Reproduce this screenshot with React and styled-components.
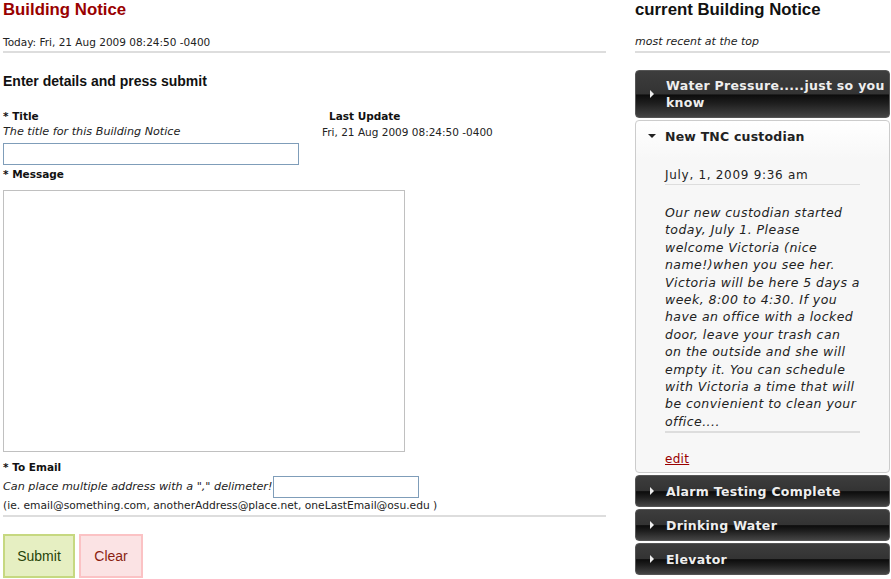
import React from 'react';
import styled, { createGlobalStyle } from 'styled-components';

const Global = createGlobalStyle`
  html, body {
    margin: 0;
    padding: 0;
    background: #fff;
    font-family: 'DejaVu Sans', Verdana, sans-serif;
    color: #222;
  }
`;

const notices = [
  { id: 1, title: 'Water Pressure.....just so you know' },
  {
    id: 2,
    title: 'New TNC custodian',
    open: true,
    date: 'July, 1, 2009 9:36 am',
    body:
      'Our new custodian started today, July 1. Please welcome Victoria (nice name!)when you see her. Victoria will be here 5 days a week, 8:00 to 4:30. If you have an office with a locked door, leave your trash can on the outside and she will empty it. You can schedule with Victoria a time that will be convienient to clean your office....',
  },
  { id: 3, title: 'Alarm Testing Complete' },
  { id: 4, title: 'Drinking Water' },
  { id: 5, title: 'Elevator' },
];

const Page = styled.div`
  display: flex;
  align-items: flex-start;
  padding: 0 1px 0 3px;
  gap: 29px;
`;

const Main = styled.div`
  width: 603px;
`;

const Side = styled.div`
  width: 255px;
`;

const Title = styled.h1`
  margin: 0;
  font-family: 'Liberation Sans', Arial, sans-serif;
  font-size: 16.8px;
  line-height: 20px;
  font-weight: bold;
  color: ${(p) => (p.side ? '#111' : '#990000')};
`;

const SubLine = styled.div`
  margin-top: 15px;
  font-size: ${(p) => (p.italic ? '11px' : '10.5px')};
  line-height: 14px;
  font-style: ${(p) => (p.italic ? 'italic' : 'normal')};
  padding-bottom: 2px;
  border-bottom: 2px solid #ddd;
`;

const Section = styled.h3`
  margin: 19px 0 0;
  font-family: 'Liberation Sans', Arial, sans-serif;
  font-size: 14px;
  line-height: 18px;
  font-weight: bold;
  color: #111;
`;

const FieldRow = styled.div`
  display: flex;
  margin-top: 19px;
`;

const FieldCol = styled.div`
  width: ${(p) => p.w}px;
`;

const Label = styled.div`
  font-size: 10.5px;
  line-height: 14px;
  font-weight: bold;
  color: #111;
  margin-top: ${(p) => p.top || 0}px;
  padding-left: ${(p) => p.indent || 0}px;
`;

const Hint = styled.div`
  font-size: 11.2px;
  line-height: 18px;
  font-style: italic;
`;

const Plain = styled.div`
  font-size: ${(p) => p.size || 10.7}px;
  line-height: ${(p) => p.lh || 18}px;
`;

const TextInput = styled.input`
  display: block;
  box-sizing: border-box;
  width: ${(p) => p.w}px;
  height: 22px;
  margin: ${(p) => p.top || 0}px 0 0;
  border: 1px solid #7f9db9;
  background: #fff;
  padding: 2px;
  font: inherit;
`;

const Message = styled.textarea`
  display: block;
  box-sizing: border-box;
  width: 402px;
  height: 262px;
  margin: 9px 0 0;
  border: 1px solid #c0c0c0;
  resize: none;
`;

const EmailLine = styled.div`
  display: flex;
  align-items: center;
  gap: 1px;
  margin-top: 2px;
`;

const Rule = styled.div`
  margin-top: 1px;
  border-bottom: 2px solid #ddd;
`;

const Buttons = styled.div`
  display: flex;
  gap: 4px;
  margin-top: 17px;
`;

const Btn = styled.button`
  box-sizing: border-box;
  height: 44px;
  width: ${(p) => p.w}px;
  border: 2px solid ${(p) => (p.kind === 'ok' ? '#c6d880' : '#fbc2c4')};
  background: ${(p) => (p.kind === 'ok' ? '#e6efc2' : '#fbe3e4')};
  color: ${(p) => (p.kind === 'ok' ? '#264409' : '#8a1f11')};
  font-family: 'Liberation Sans', Arial, sans-serif;
  font-size: 14px;
  padding: 0;
`;

const Accordion = styled.div`
  margin-top: 17px;
  display: flex;
  flex-direction: column;
  gap: 2px;
`;

const Head = styled.div`
  display: flex;
  align-items: center;
  box-sizing: border-box;
  min-height: 32px;
  padding: 6px 4px 6px 30px;
  position: relative;
  border: 1px solid #555;
  border-radius: 4px;
  background: linear-gradient(
    to bottom,
    #3d3d3d 0%,
    #333 50%,
    #0c0c0c 52%,
    #1e1e1e 70%,
    #444 100%
  );
  color: #eee;
  font-size: 12.5px;
  font-weight: bold;
  line-height: 17px;
  letter-spacing: 0.3px;
`;

const OpenHead = styled.div`
  display: flex;
  align-items: center;
  height: 30px;
  padding-left: 29px;
  position: relative;
  color: #222;
  font-size: 12.5px;
  font-weight: bold;
  letter-spacing: 0.2px;
`;

const Arrow = styled.svg`
  position: absolute;
  left: ${(p) => p.$left}px;
  top: 50%;
  margin-top: ${(p) => p.$mt}px;
`;

const Panel = styled.div`
  border: 1px solid #ccc;
  border-radius: 4px;
  background: linear-gradient(to bottom, #fff 0px, #f7f7f7 40px, #f7f7f7 100%);
`;

const PanelBody = styled.div`
  padding: 16px 29px 4px 29px;
`;

const DateLine = styled.div`
  font-size: 12px;
  line-height: 16px;
  color: #222;
  padding-bottom: 1px;
  border-bottom: 1px solid #ddd;
  letter-spacing: 0.7px;
`;

const Body = styled.p`
  margin: 19px 0 0;
  font-size: 12.5px;
  line-height: 17.4px;
  font-style: italic;
  color: #222;
  padding-bottom: 1px;
  border-bottom: 2px solid #ddd;
  letter-spacing: 0.45px;
`;

const Edit = styled.a`
  display: inline-block;
  margin-top: 18px;
  font-size: 12px;
  line-height: 17px;
  color: #990000;
  text-decoration: underline;
  letter-spacing: 0.3px;
`;

export default function App() {
  return (
    <>
      <Global />
      <Page>
        <Main>
          <Title>Building Notice</Title>
          <SubLine>Today: Fri, 21 Aug 2009 08:24:50 -0400</SubLine>
          <Section>Enter details and press submit</Section>
          <FieldRow>
            <FieldCol w={319}>
              <Label>* Title</Label>
              <Hint>The title for this Building Notice</Hint>
              <TextInput w={296} top={2} />
            </FieldCol>
            <FieldCol w={280}>
              <Label indent={7}>Last Update</Label>
              <Plain size={10.5}>Fri, 21 Aug 2009 08:24:50 -0400</Plain>
            </FieldCol>
          </FieldRow>
          <Label top={2}>* Message</Label>
          <Message />
          <Label top={8}>* To Email</Label>
          <EmailLine>
            <Hint>Can place multiple address with a "," delimeter!</Hint>
            <TextInput w={146} />
          </EmailLine>
          <Plain lh={16}>(ie. email@something.com, anotherAddress@place.net, oneLastEmail@osu.edu )</Plain>
          <Rule />
          <Buttons>
            <Btn kind="ok" w={72}>Submit</Btn>
            <Btn kind="bad" w={64}>Clear</Btn>
          </Buttons>
        </Main>
        <Side>
          <Title side>current Building Notice</Title>
          <SubLine italic>most recent at the top</SubLine>
          <Accordion>
            {notices.map((n) =>
              n.open ? (
                <Panel key={n.id}>
                  <OpenHead>
                    <Arrow $left={12} $mt={-2} width="8" height="5" viewBox="0 0 8 5">
                      <path d="M0 0 L8 0 L4 4 Z" fill="#222" />
                    </Arrow>
                    {n.title}
                  </OpenHead>
                  <PanelBody>
                    <DateLine>{n.date}</DateLine>
                    <Body>{n.body}</Body>
                    <Edit href="#">edit</Edit>
                  </PanelBody>
                </Panel>
              ) : (
                <Head key={n.id}>
                  <Arrow $left={14} $mt={-4} width="5" height="8" viewBox="0 0 5 8">
                    <path d="M0 0 L4 4 L0 8 Z" fill="#eee" />
                  </Arrow>
                  {n.title}
                </Head>
              )
            )}
          </Accordion>
        </Side>
      </Page>
    </>
  );
}
